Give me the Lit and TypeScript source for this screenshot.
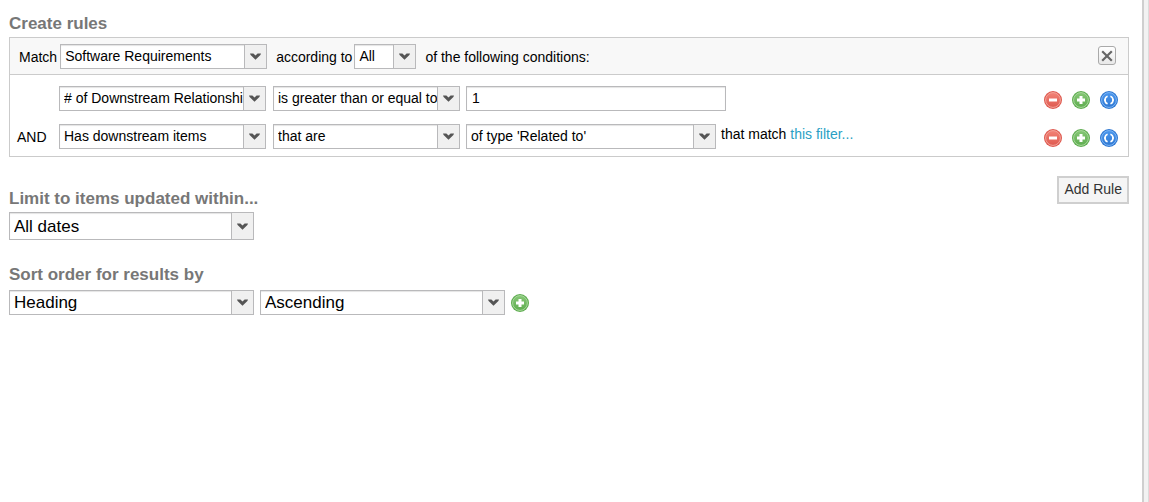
import { LitElement, html, svg, css } from "lit";
import { customElement, property } from "lit/decorators.js";

@customElement("select-box")
class SelectBox extends LitElement {
  @property() label = "";
  @property({ attribute: false }) options: string[] = [];

  static styles = css`
    :host {
      display: block;
      min-width: 0;
    }
    .box {
      display: grid;
      grid-template-columns: minmax(0, 1fr) 22px;
      height: var(--box-height, 25px);
      box-sizing: border-box;
      border: 1px solid #b9b9bb;
      box-shadow: inset 0 1px 1px #e4e4e4;
      background: #fff;
    }
    select {
      grid-area: 1 / 1 / 2 / 3;
      appearance: none;
      min-width: 0;
      margin: 0;
      padding: var(--text-top, 0) 22px var(--text-bottom, 1px) 4px;
      border: 0;
      border-radius: 0;
      background: transparent;
      color: #000;
      font: inherit;
      text-overflow: clip;
    }
    .trigger {
      grid-area: 1 / 2 / 2 / 3;
      display: grid;
      place-items: center;
      border-left: 1px solid #b9b9bb;
      background: #f0f0f0;
      pointer-events: none;
    }
    svg {
      display: block;
    }
  `;

  render() {
    return html`<div class="box">
      <select aria-label=${this.label}>
        ${this.options.map((o) => html`<option>${o}</option>`)}
      </select>
      <span class="trigger">
        <svg width="11" height="7" viewBox="0 0 11 7">
          <path d="M0 .5H3.4L5.5 2.6 7.6 .5H11L10.4 2 5.5 6.8.6 2Z" fill="#555" />
        </svg>
      </span>
    </div>`;
  }
}

const palettes = {
  remove: ["#df5a50", "#f28377", "#f3a59b"],
  add: ["#5fad50", "#86c776", "#a8d89c"],
  nest: ["#2f78d2", "#4b97ee", "#7db6f6"],
};

const glyphs = {
  remove: svg`<path d="M5 9H13" stroke-width="3" />`,
  add: svg`<path d="M5 9H13M9 5V13" stroke-width="3" />`,
  nest: svg`<path d="M7.6 5.2Q5 6 5 9 5 12 7.6 12.8M10.4 5.2Q13 6 13 9 13 12 10.4 12.8" stroke-width="1.6" /><path d="M4 9H6M12 9H14" stroke-width="1.4" />`,
};

type Kind = keyof typeof palettes;

@customElement("round-button")
class RoundButton extends LitElement {
  @property() kind: Kind = "add";
  @property() label = "";

  static styles = css`
    :host {
      display: block;
    }
    button {
      display: block;
      padding: 0;
      border: 0;
      background: none;
      cursor: pointer;
    }
    svg {
      display: block;
    }
  `;

  render() {
    const [edge, fill, ring] = palettes[this.kind];
    return html`<button type="button" aria-label=${this.label}>
      <svg width="18" height="18" viewBox="0 0 18 18" fill="none">
        <defs>
          <linearGradient id="face" x1="0" y1="0" x2="0" y2="1">
            <stop offset="0" stop-color=${fill} />
            <stop offset="1" stop-color=${edge} />
          </linearGradient>
        </defs>
        <circle cx="9" cy="9" r="9" fill=${edge} />
        <circle cx="9" cy="9" r="7.4" fill="url(#face)" stroke=${ring} stroke-width="1" />
        <g stroke="#fff">${glyphs[this.kind]}</g>
      </svg>
    </button>`;
  }
}

@customElement("app-root")
class AppRoot extends LitElement {
  static styles = css`
    :host {
      display: flex;
      min-height: 100vh;
      background: #fff;
      color: #000;
      font: 14px/18px "Liberation Sans", Arial, sans-serif;
    }
    main {
      flex: 1;
      min-width: 0;
      padding: 14px 13px 0 9px;
    }
    .edge {
      width: 4px;
      border-left: 2px solid #cfcfcf;
      border-right: 1px solid #dcdcdc;
      background: #f2f2f2;
    }
    h2 {
      margin: 0;
      color: #777;
      font-size: 17px;
      line-height: 20px;
    }
    .panel {
      margin-top: 3px;
      border: 1px solid #cbcbcb;
    }
    .head {
      display: flex;
      align-items: center;
      padding: 6px 12px 5px 9px;
      border-bottom: 1px solid #cbcbcb;
      background: #f8f8f8;
    }
    .field {
      width: 207px;
      margin: 0 9px 0 3px;
    }
    .mode {
      width: 62px;
      margin: 0 9px 0 2px;
    }
    .close {
      display: grid;
      place-items: center;
      width: 18px;
      height: 19px;
      margin: 0 0 2px auto;
      padding: 0;
      border: 1px solid #aaa;
      border-radius: 3px;
      background: linear-gradient(#fff, #e8e8e8);
    }
    .rules {
      display: grid;
      gap: 13px;
      padding: 11px 10px 7px 7px;
    }
    .rule {
      display: grid;
      grid-template-columns: 35px 207px 187px minmax(0, 1fr) auto;
      column-gap: 7px;
      align-items: center;
    }
    .value {
      display: flex;
      gap: 5px;
      line-height: 20px;
    }
    .rule .value {
      margin-left: -1px;
    }
    .value input {
      box-sizing: border-box;
      width: 260px;
      height: 25px;
      padding: 0 5px 1px;
      border: 1px solid #b9b9bb;
      box-shadow: inset 0 1px 1px #e4e4e4;
      font: inherit;
    }
    .value select-box {
      width: 250px;
    }
    a {
      color: #2a9fc4;
      text-decoration: none;
    }
    .actions {
      display: flex;
      gap: 10px;
      padding-top: 2px;
    }
    .lower {
      display: flex;
      justify-content: space-between;
      align-items: flex-start;
      padding-top: 19px;
    }
    .lower h2 {
      padding-top: 13px;
    }
    .add {
      height: 28px;
      padding: 0 5px 2px;
      border: 2px solid #cfcfcf;
      background: #f5f5f5;
      color: #333;
      font: inherit;
    }
    .large {
      --text-top: 1px;
      --text-bottom: 0;
      width: 245px;
      font-size: 17px;
    }
    .tall {
      --box-height: 28px;
      margin-top: 3px;
    }
    .sort-title {
      margin-top: 25px;
    }
    .sort {
      display: flex;
      align-items: center;
      gap: 6px;
      margin-top: 5px;
    }
  `;

  private actions() {
    return html`<div class="actions">
      <round-button kind="remove" label="Remove condition"></round-button>
      <round-button kind="add" label="Add condition"></round-button>
      <round-button kind="nest" label="Add nested group"></round-button>
    </div>`;
  }

  render() {
    return html`
      <main>
        <h2>Create rules</h2>
        <section class="panel">
          <div class="head">
            <span>Match</span>
            <select-box class="field" label="Match" .options=${["Software Requirements"]}></select-box>
            <span>according to</span>
            <select-box class="mode" label="According to" .options=${["All"]}></select-box>
            <span>of the following conditions:</span>
            <button class="close" type="button" aria-label="Remove rule">
              <svg width="12" height="12" viewBox="0 0 12 12">
                <path d="M1.2 1.2 10.8 10.8M10.8 1.2 1.2 10.8" stroke="#666" stroke-width="2.2" />
              </svg>
            </button>
          </div>
          <div class="rules">
            <div class="rule">
              <span></span>
              <select-box label="Field" .options=${["# of Downstream Relationshi"]}></select-box>
              <select-box label="Operator" .options=${["is greater than or equal to"]}></select-box>
              <div class="value"><input type="text" aria-label="Value" .value=${"1"} /></div>
              ${this.actions()}
            </div>
            <div class="rule">
              <span>AND</span>
              <select-box label="Field" .options=${["Has downstream items"]}></select-box>
              <select-box label="Operator" .options=${["that are"]}></select-box>
              <div class="value">
                <select-box label="Relationship type" .options=${["of type 'Related to'"]}></select-box>
                <span>that match <a href="#">this filter...</a></span>
              </div>
              ${this.actions()}
            </div>
          </div>
        </section>
        <div class="lower">
          <div>
            <h2>Limit to items updated within...</h2>
            <select-box class="large tall" label="Limit to items updated within" .options=${["All dates"]}></select-box>
          </div>
          <button class="add" type="button">Add Rule</button>
        </div>
        <h2 class="sort-title">Sort order for results by</h2>
        <div class="sort">
          <select-box class="large" label="Sort field" .options=${["Heading"]}></select-box>
          <select-box class="large" label="Sort direction" .options=${["Ascending"]}></select-box>
          <round-button kind="add" label="Add sort order"></round-button>
        </div>
      </main>
      <div class="edge"></div>
    `;
  }
}
